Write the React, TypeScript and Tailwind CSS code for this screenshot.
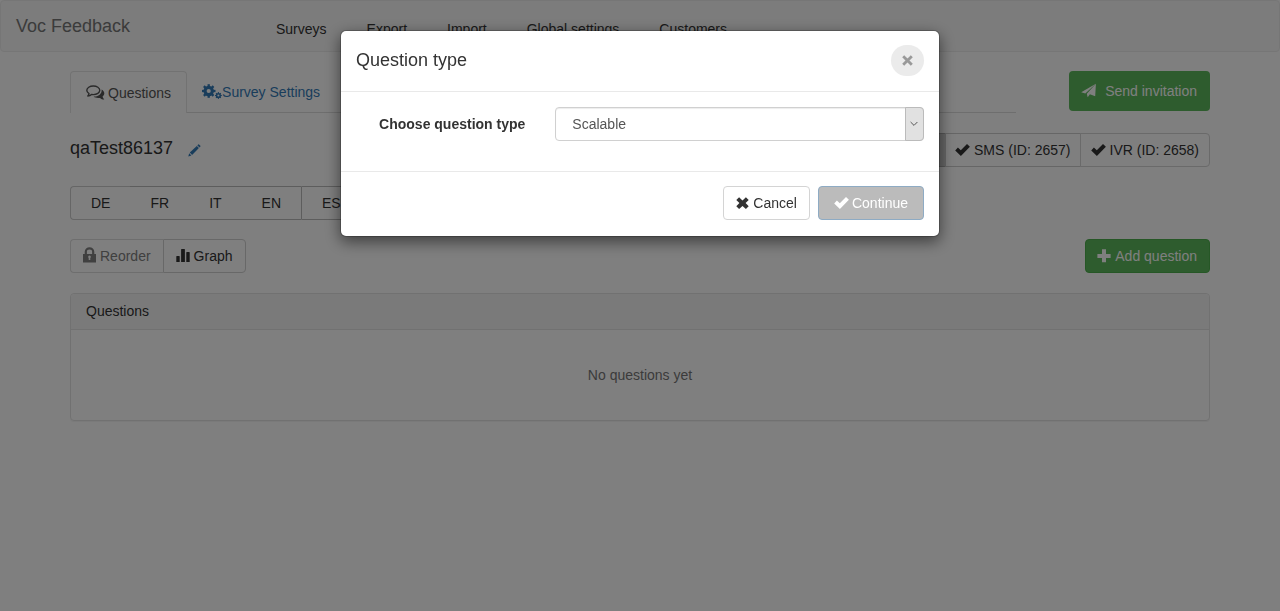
import { useState, type ReactNode } from "react";

const navLinks = ["Surveys", "Export", "Import", "Global settings", "Customers"];
const languages = ["FR", "IT", "EN"];

function CheckIcon() {
  return (
    <svg width="15" height="14" viewBox="0 0 15 14" fill="currentColor" aria-hidden="true">
      <path d="M0.2 7.500 2.900 4.600 5.800 7.300 12 0.900 14.900 3.700 5.900 12.900Z" />
    </svg>
  );
}

function CrossIcon({ size = 13 }: { size?: number }) {
  return (
    <svg width={size} height={size} viewBox="0 0 13 13" fill="currentColor" aria-hidden="true">
      <path d="M3.100.3 6.500 3.400 9.900.3 12.700 3.100 9.600 6 12.700 9.200 9.900 12 6.500 8.900 3.100 12 .3 9.200 3.400 6 .3 3.100Z" />
    </svg>
  );
}

function CloseIcon() {
  return (
    <svg width="11" height="11" viewBox="0 0 11 11" fill="none" stroke="currentColor" strokeWidth="2.800" aria-hidden="true">
      <path d="M1.200 1.200 9.800 9.800M9.800 1.200 1.200 9.800" />
    </svg>
  );
}

function PlusIcon() {
  return (
    <svg width="14" height="14" viewBox="0 0 14 14" fill="currentColor" aria-hidden="true">
      <path d="M5 .3h4V5h4.600v4H9v4.300H5V9H.4V5H5Z" />
    </svg>
  );
}

function PlaneIcon() {
  return (
    <svg width="15" height="16" viewBox="0 0 15 16" fill="currentColor" aria-hidden="true">
      <path d="M14.900.8.2 9.300 4.300 10.500Z" />
      <path d="M14.900.8 14.200 13.200 8.900 11.300 6.700 14.300 5.800 10.800Z" />
    </svg>
  );
}

function CommentsIcon() {
  return (
    <svg width="20" height="16" viewBox="0 0 20 16" aria-hidden="true">
      <path
        d="M15.600 4.400c1.700.9 2.700 2.300 2.700 3.900 0 1.300-.6 2.400-1.700 3.200.1 1.100.9 2 1.700 2.900-1.900 0-3.200-.5-4.200-1.500-2.800.4-5.100 0-6.500-1.300 4.900 0 8.600-3 8-7.200Z"
        fill="currentColor"
      />
      <path
        d="M7.300 1c3.600 0 6.500 1.900 6.500 4.300S10.900 9.600 7.300 9.600c-.6 0-1.200 0-1.800-.2-.9.900-2.200 1.500-3.700 1.600.7-.7 1.100-1.400 1.200-2.400C1.600 7.800.8 6.600.8 5.300.8 2.900 3.700 1 7.300 1Z"
        fill="none"
        stroke="currentColor"
        strokeWidth="1.400"
        strokeLinejoin="round"
      />
    </svg>
  );
}

const teeth = [0, 45, 90, 135];

function Gear({ cx, cy, r }: { cx: number; cy: number; r: number }) {
  return (
    <g>
      <circle cx={cx} cy={cy} r={r * 0.54} fill="none" stroke="currentColor" strokeWidth={r * 0.46} />
      {teeth.map((angle) => (
        <g key={angle} transform={`rotate(${angle} ${cx} ${cy})`} fill="currentColor">
          <rect x={cx - r * 0.17} y={cy - r} width={r * 0.34} height={r * 0.35} />
          <rect x={cx - r * 0.17} y={cy + r * 0.65} width={r * 0.34} height={r * 0.35} />
        </g>
      ))}
    </g>
  );
}

function CogsIcon() {
  return (
    <svg width="20" height="16" viewBox="0 0 20 16" aria-hidden="true">
      <Gear cx={6.700} cy={7} r={6.800} />
      <Gear cx={16.400} cy={11.500} r={3.400} />
    </svg>
  );
}

function PencilIcon() {
  return (
    <svg width="13" height="13" viewBox="0 0 13 13" fill="currentColor" aria-hidden="true">
      <path d="M.3 12.400 1.200 9.300 3.400 11.500Z" />
      <path d="M1.800 8.600 8.800 1.900 10.900 4 4.100 10.900Z" />
      <path d="M9.300 1.300 10.200.4Q10.600.1 11 .4L12.400 1.800Q12.700 2.200 12.400 2.600L11.500 3.500Z" />
    </svg>
  );
}

function LockIcon() {
  return (
    <svg width="13" height="16" viewBox="0 0 13 16" className="-mt-0.5" aria-hidden="true">
      <path d="M2.800 8V4.800a3.700 3.500 0 0 1 7.400 0V8" fill="none" stroke="currentColor" strokeWidth="2.200" />
      <path
        fillRule="evenodd"
        fill="currentColor"
        d="M0 7h13v8.500H0ZM6.500 8.600a1.400 1.400 0 0 0-.8 2.500v2h1.600v-2a1.400 1.400 0 0 0-.8-2.500Z"
      />
    </svg>
  );
}

function GraphIcon() {
  return (
    <svg width="14" height="14" viewBox="0 0 14 14" fill="currentColor" aria-hidden="true">
      <path d="M.8 7h2.400q.5 0 .5.500V13H.3V7.500Q.3 7 .8 7ZM5.600 0h2.800q.5 0 .5.500V13H5.100V.5q0-.5.500-.5ZM10.800 3h2.400q.5 0 .5.500V13h-3.400V3.500q0-.5.500-.5Z" />
    </svg>
  );
}

function PanelButton({ children, className }: { children: ReactNode; className: string }) {
  return (
    <button type="button" className={`flex h-[34px] items-center gap-1 border bg-white ${className}`}>
      {children}
    </button>
  );
}

export default function App() {
  const [questionType, setQuestionType] = useState("Scalable");

  return (
    <div className="min-h-screen bg-white font-['Liberation_Sans',Arial,sans-serif] text-sm text-[#333]">
      <nav className="flex h-[52px] items-center rounded border border-[#ededed] bg-[#f8f8f8] px-[15px]">
        <a href="#home" className="w-[240px] text-lg text-[#777]">Voc Feedback</a>
        <div className="flex gap-10 px-5 pt-[6px]">
          {navLinks.map((link) => (
            <a key={link} href="#nav" className="text-[#333]">{link}</a>
          ))}
        </div>
      </nav>

      <main className="mx-auto max-w-[1170px] px-[15px] pt-[19px]">
        <div className="flex items-start justify-between">
          <div className="flex w-5/6 pr-1">
            <div className="flex flex-1 border-b border-[#ddd]">
              <a href="#questions" className="-mb-px flex h-[42px] items-center gap-[2px] rounded-t border border-b-0 border-[#e4e4e4] bg-white px-[15px] pt-px text-[#555]">
                <CommentsIcon />
                Questions
              </a>
              <a href="#settings" className="flex h-[41px] items-center px-[15px] text-[#337ab7]">
                <CogsIcon />
                Survey Settings
              </a>
            </div>
          </div>
          <button type="button" className="flex h-10 items-center gap-[9px] rounded bg-[#5cb85c] pr-[13px] pl-3 text-white">
            <PlaneIcon />
            Send invitation
          </button>
        </div>

        <div className="mt-5 flex h-[34px] items-center justify-between">
          <div className="flex items-center gap-[15px] pb-1">
            <h1 className="text-lg">qaTest86137</h1>
            <button type="button" aria-label="Rename survey" className="pt-1 text-[#337ab7]"><PencilIcon /></button>
          </div>
          <div className="flex">
            <button type="button" aria-label="Web" className="-mr-px h-[34px] w-32 rounded-l border border-[#adadad] bg-[#cecece]" />
            <PanelButton className="-mr-px border-[#ccc] px-[9px]"><CheckIcon />SMS (ID: 2657)</PanelButton>
            <PanelButton className="rounded-r border-[#d4d4d4] px-[10px]"><CheckIcon />IVR (ID: 2658)</PanelButton>
          </div>
        </div>

        <div className="mt-[19px] flex">
          <button type="button" className="h-[34px] rounded-l border border-r-0 border-[#ccc] px-5">DE</button>
          {languages.map((language) => (
            <button key={language} type="button" className="h-[34px] border-y border-[#bbb] px-5">{language}</button>
          ))}
          <button type="button" className="h-[34px] rounded-r border border-[#bbb] px-5">ES</button>
        </div>

        <div className="mt-[19px] flex justify-between">
          <div className="flex">
            <PanelButton className="rounded-l border-r-0 border-[#dcdcdc] px-3 text-[#808080]"><LockIcon />Reorder</PanelButton>
            <PanelButton className="rounded-r border-[#d0d0d0] px-3"><GraphIcon />Graph</PanelButton>
          </div>
          <button type="button" className="flex h-[34px] items-center gap-1 rounded border border-[#4cae4c] bg-[#5cb85c] pr-3 pl-[11px] text-white">
            <PlusIcon />
            Add question
          </button>
        </div>

        <section className="mt-5 rounded border border-[#e2e2e2] shadow-[0_1px_1px_rgba(0,0,0,0.05)]">
          <h2 className="rounded-t border-b border-[#e2e2e2] bg-[#f5f5f5] px-[15px] pt-[7px] pb-2">Questions</h2>
          <p className="px-4 py-[35px] text-center text-[#777]">No questions yet</p>
        </section>
      </main>

      <div className="fixed inset-0 bg-black/50 px-4 pt-[30px]">
        <div
          role="dialog"
          aria-modal="true"
          aria-labelledby="dialog-title"
          className="mx-auto max-w-[600px] rounded-md border border-black/20 bg-white bg-clip-padding shadow-[0_5px_15px_rgba(0,0,0,0.5)]"
        >
          <header className="flex items-center justify-between border-b border-[#e9e9e9] px-[15px] pt-[14px] pb-[15px]">
            <h2 id="dialog-title" className="pb-[2px] text-lg">Question type</h2>
            <button type="button" aria-label="Close" className="flex h-[31px] w-[33px] items-center justify-center rounded-full bg-[#ebebeb] text-[#999]">
              <CloseIcon />
            </button>
          </header>
          <div className="flex items-start py-[15px]">
            <label htmlFor="question-type" className="w-1/3 px-[15px] pt-[7px] text-right font-bold">Choose question type</label>
            <div className="w-2/3 px-[15px] pb-[15px]">
              <div className="relative flex">
                <select
                  id="question-type"
                  value={questionType}
                  onChange={(event) => setQuestionType(event.target.value)}
                  className="h-[34px] w-full appearance-none rounded border border-[#d0d0d0] bg-white px-4 text-[#555] shadow-[inset_0_1px_1px_rgba(0,0,0,0.075)]"
                >
                  <option>Scalable</option>
                </select>
                <span className="pointer-events-none absolute inset-y-0 right-0 flex w-[19px] items-center justify-center rounded-r border border-[#bbb] bg-[#e1e1e1] text-[#555]">
                  <svg width="8" height="6" viewBox="0 0 8 6" fill="none" stroke="currentColor" aria-hidden="true">
                    <path d="M.6 1 4 4.400 7.400 1" />
                  </svg>
                </span>
              </div>
            </div>
          </div>
          <footer className="flex justify-end gap-2 border-t border-[#e9e9e9] px-[15px] pt-[14px] pb-4">
            <button type="button" className="flex h-[34px] items-center gap-1 rounded border border-[#d4d4d4] bg-white px-3">
              <CrossIcon />
              Cancel
            </button>
            <button type="button" className="flex h-[34px] items-center gap-[3px] rounded border border-[#8eabc4] bg-[#bbb] px-[15px] text-white">
              <CheckIcon />
              Continue
            </button>
          </footer>
        </div>
      </div>
    </div>
  );
}
